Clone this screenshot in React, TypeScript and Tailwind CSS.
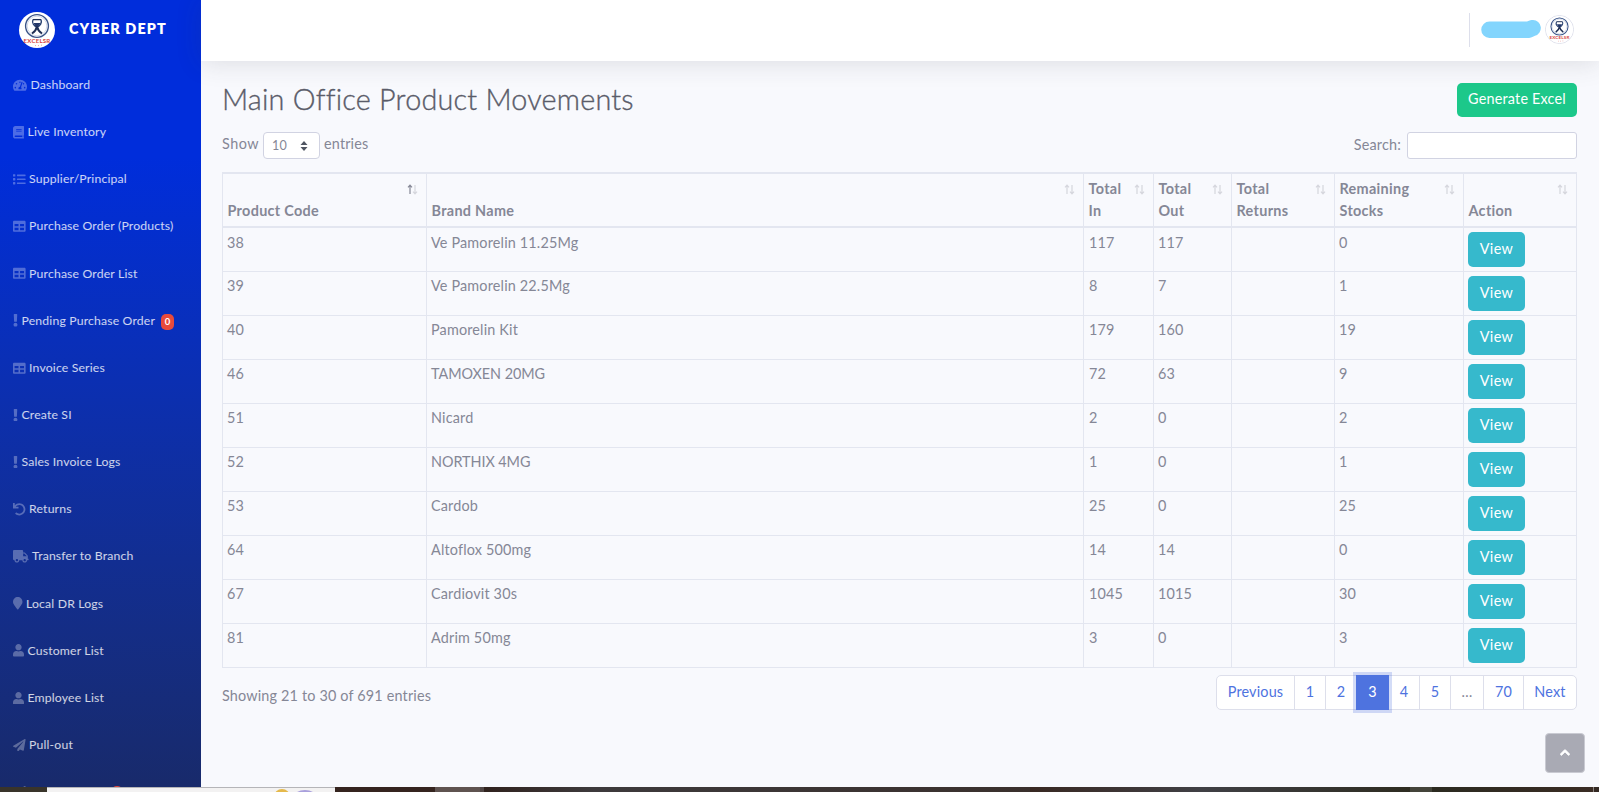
import type { ReactNode } from "react";
import type { IconType } from "react-icons";
import {
  FaBook,
  FaChevronUp,
  FaExclamation,
  FaList,
  FaMapMarker,
  FaPaperPlane,
  FaTable,
  FaTachometerAlt,
  FaTruck,
  FaUndo,
  FaUser,
} from "react-icons/fa";

type NavItem = { label: string; icon: IconType; width: string; badge?: string };

const navItems: NavItem[] = [
  { label: "Dashboard", icon: FaTachometerAlt, width: "w-[14px]" },
  { label: "Live Inventory", icon: FaBook, width: "w-[11px]" },
  { label: "Supplier/Principal", icon: FaList, width: "w-[12.6px]" },
  { label: "Purchase Order (Products)", icon: FaTable, width: "w-[12.6px]" },
  { label: "Purchase Order List", icon: FaTable, width: "w-[12.6px]" },
  { label: "Pending Purchase Order", icon: FaExclamation, width: "w-[5px]", badge: "0" },
  { label: "Invoice Series", icon: FaTable, width: "w-[12.6px]" },
  { label: "Create SI", icon: FaExclamation, width: "w-[5px]" },
  { label: "Sales Invoice Logs", icon: FaExclamation, width: "w-[5px]" },
  { label: "Returns", icon: FaUndo, width: "w-[12.6px]" },
  { label: "Transfer to Branch", icon: FaTruck, width: "w-[15.6px]" },
  { label: "Local DR Logs", icon: FaMapMarker, width: "w-[9.5px]" },
  { label: "Customer List", icon: FaUser, width: "w-[11px]" },
  { label: "Employee List", icon: FaUser, width: "w-[11px]" },
  { label: "Pull-out", icon: FaPaperPlane, width: "w-[12.6px]" },
];

const rows = [
  ["38", "Ve Pamorelin 11.25Mg", "117", "117", "", "0"],
  ["39", "Ve Pamorelin 22.5Mg", "8", "7", "", "1"],
  ["40", "Pamorelin Kit", "179", "160", "", "19"],
  ["46", "TAMOXEN 20MG", "72", "63", "", "9"],
  ["51", "Nicard", "2", "0", "", "2"],
  ["52", "NORTHIX 4MG", "1", "0", "", "1"],
  ["53", "Cardob", "25", "0", "", "25"],
  ["64", "Altoflox 500mg", "14", "14", "", "0"],
  ["67", "Cardiovit 30s", "1045", "1015", "", "30"],
  ["81", "Adrim 50mg", "3", "0", "", "3"],
];

const columns = ["Product Code", "Brand Name", "Total In", "Total Out", "Total Returns", "Remaining Stocks", "Action"];

const pages = ["Previous", "1", "2", "3", "4", "5", "…", "70", "Next"];
const pageWidths = ["w-[78px]", "w-[31px]", "w-[30px]", "w-[33px]", "w-[31px]", "w-[31px]", "w-[33px]", "w-[40px]", "w-[52px]"];

function Logo({ className }: { className: string }) {
  return (
    <svg viewBox="0 0 36 36" className={className}>
      <circle cx="18" cy="18" r="18" fill="#fff" />
      <circle cx="18" cy="14" r="11.4" fill="none" stroke="#3a5488" strokeWidth="1.4" />
      <circle cx="18" cy="14" r="9.8" fill="none" stroke="#b4c0d6" strokeWidth="0.6" />
      <path d="M14 7.600h8" stroke="#1f2f55" strokeWidth="1.3" />
      <path d="M14 7.600c-1.200 3.200.8 6.200 4 7.400 3.200-1.200 5.200-4.200 4-7.400" fill="none" stroke="#27406f" strokeWidth="1.4" />
      <path d="M14.600 11h6.800c-.7 2-1.900 3-3.400 4-1.500-1-2.700-2-3.400-4z" fill="#24386a" />
      <path d="M18 14.500c-.6 3-2 5-5 7M18 14.500c.6 3 2 5 5 7" fill="none" stroke="#1f2f55" strokeWidth="2" />
      <text x="18" y="31.300" textAnchor="middle" fontSize="4.800" fontWeight="700" fill="#d9463e" textLength="27" lengthAdjust="spacingAndGlyphs">
        EXCELSR
      </text>
      <path d="M16 33.600h1M19 33.600h1M22 33.200h1" stroke="#e58a84" strokeWidth="0.8" />
    </svg>
  );
}

function SortIcon({ active }: { active?: boolean }) {
  return (
    <svg viewBox="0 0 11 11" className="h-[11px] w-[11px] shrink-0" fill="none">
      <path d="M3 10V1.4M1 3.4L3 1.200l2 2.200" stroke={active ? "#858796" : "#d5d6dd"} strokeWidth="1.2" />
      <path d="M8 1v8.600M6 7.600L8 9.800l2-2.200" stroke="#d5d6dd" strokeWidth="1.2" />
    </svg>
  );
}

function Cell({ children, className }: { children: ReactNode; className: string }) {
  return <td className={`border border-[#e3e6f0] pb-0 pt-[3.5px] align-top ${className}`}>{children}</td>;
}

export default function App() {
  return (
    <div className="flex h-[792px] w-[1599px] flex-col overflow-hidden bg-[#f8f9fd] font-['Lato',sans-serif] text-[14.4px] leading-[21.6px] tracking-[0.17px] text-[#858796]">
      <div className="flex h-[787px] shrink-0 overflow-hidden">
        <aside className="flex w-[201px] shrink-0 flex-col overflow-hidden bg-linear-to-b from-[#002ddb] from-20% to-[#182a6b]">
          <div className="flex h-[61.5px] shrink-0 items-center pl-[19px]">
            <Logo className="mt-[-2px] h-9 w-9" />
            <span className="ml-[14px] mt-[-3px] text-[14.4px] font-extrabold tracking-[1.1px] text-white">CYBER DEPT</span>
          </div>
          <nav className="flex flex-col">
            {navItems.map(({ label, icon: Icon, width, badge }) => (
              <div key={label} className="flex h-[47.15px] shrink-0 items-center pl-[13px] text-[12.24px] leading-[18px] text-white/80">
                <Icon className={`h-[12.6px] shrink-0 text-white/30 ${width}`} />
                <span className="ml-[3.5px] whitespace-nowrap tracking-[0.16px]">{label}</span>
                {badge && (
                  <span className="ml-[6px] mt-[2px] flex h-4 w-[13px] items-center justify-center rounded-[5px] bg-[#e74a3b] text-[9.5px] font-bold tracking-normal text-white">
                    {badge}
                  </span>
                )}
              </div>
            ))}
            <div className="flex h-[47px] shrink-0 items-start pl-[13px] pt-[17px]">
              <FaPaperPlane className="h-[12.6px] w-[12.6px] text-white/30" />
              <span className="ml-[84px] h-4 w-[14px] rounded-full bg-[#e74a3b]" />
            </div>
          </nav>
        </aside>

        <div className="flex min-w-0 flex-1 flex-col">
          <header className="z-10 flex h-[61px] shrink-0 items-center justify-end bg-white pr-[25px] shadow-[0_2px_26px_0_rgba(58,59,69,0.15)]">
            <div className="mr-[11px] mt-[-2px] h-[34px] w-px bg-[#dddfeb]" />
            <svg viewBox="0 0 60 18" className="mr-[4px] mt-[-3px] h-[18px] w-[60px]">
              <path d="M8.500 1.500H46C49 .2 50 0 52 0a8 8 0 0 1 2 15.700C51 17.500 49 18 46 18H8.500a8.250 8.250 0 0 1 0-16.500z" fill="#83d5fd" />
            </svg>
            <div className="mt-[-2px] flex h-[29px] w-[29px] items-center justify-center rounded-full border border-[#dddfeb] bg-white">
              <Logo className="h-[27px] w-[27px]" />
            </div>
          </header>

          <main className="flex flex-1 flex-col pl-[21px] pr-[22px]">
            <div className="mt-[22px] flex h-[34px] items-center justify-between">
              <h1 className="mt-[-2px] text-[28.8px] font-light leading-[34px] tracking-[0.21px] text-[#5a5c69] [-webkit-text-stroke:0.35px_#5a5c69]">
                Main Office Product Movements
              </h1>
              <button className="h-[34px] w-[120px] rounded-[5px] bg-[#1cc88a] pb-[2px] tracking-[0.2px] text-white">Generate Excel</button>
            </div>

            <div className="mt-[15px] flex h-[27px] items-center justify-between">
              <div className="flex items-center">
                <span className="mt-[-3px] tracking-[0.5px]">Show</span>
                <div className="ml-[4px] flex h-[27px] w-[57px] items-center justify-between rounded-[4px] border border-[#d1d3e2] bg-white pl-[8px] pr-[11px] text-[12.6px]">
                  <span>10</span>
                  <svg viewBox="0 0 8 10" className="h-[10px] w-[8px]" fill="#4f5561">
                    <path d="M4 0l3.500 4h-7zM4 10L.5 6h7z" />
                  </svg>
                </div>
                <span className="ml-[4px] mt-[-3px] tracking-[0.15px]">entries</span>
              </div>
              <div className="flex items-center">
                <span className="mt-[-2px]">Search:</span>
                <div className="ml-[6px] h-[27px] w-[170px] rounded-[3px] border border-[#d1d3e2] bg-white" />
              </div>
            </div>

            <table className="mt-[13px] w-[1354px] max-w-[1354px] table-fixed border-collapse border border-[#e3e6f0]">
              <colgroup>
                <col className="w-[204px]" />
                <col className="w-[657px]" />
                <col className="w-[70px]" />
                <col className="w-[78px]" />
                <col className="w-[103px]" />
                <col className="w-[129px]" />
                <col className="w-[113px]" />
              </colgroup>
              <thead>
                <tr className="h-[54px]">
                  {columns.map((name, i) => (
                    <th key={name} className="border-x border-y-2 border-[#e3e6f0] p-0 align-bottom font-bold">
                      <div className={`flex h-[52px] justify-between pb-[4.500px] pl-[4.5px] text-left tracking-[0.32px] ${i < 2 ? "pr-[8px]" : "pr-[8px]"}`}>
                        <span className={i === 5 ? "w-[80px] self-end" : i > 1 && i < 5 ? "w-[40px] self-end" : "self-end"}>{name}</span>
                        <div className="pt-[10px]">
                          <SortIcon active={i === 0} />
                        </div>
                      </div>
                    </th>
                  ))}
                </tr>
              </thead>
              <tbody>
                {rows.map((row) => (
                  <tr key={row[0]} className="h-[44px]">
                    {row.map((value, i) => (
                      <Cell key={i} className={i === 1 && value === value.toUpperCase() ? "pl-[4px] tracking-[-0.05px]" : i === 2 ? "pl-[5px]" : "pl-[4px]"}>
                        {value}
                      </Cell>
                    ))}
                    <td className="border border-[#e3e6f0] py-0 pl-[4px] align-middle">
                      <button className="block h-[35px] w-[57px] rounded-[5px] bg-[#36b9cc] tracking-[0.35px] text-white">View</button>
                    </td>
                  </tr>
                ))}
              </tbody>
            </table>

            <div className="mt-[7px] flex h-[35px] items-center justify-between">
              <span className="mt-[8px]">Showing 21 to 30 of 691 entries</span>
              <div className="flex h-[35px] overflow-visible rounded-[5px] border border-[#dddfeb] bg-white text-[#4e73df]">
                {pages.map((page, i) => (
                  <div
                    key={page}
                    className={`flex items-center justify-center ${pageWidths[i]} ${
                      page === "3"
                        ? "z-10 -my-px bg-[#4e73df] text-white shadow-[0_0_0_3px_rgba(78,115,223,0.25)]"
                        : i < 8 && i !== 2
                          ? "border-r border-[#dddfeb]"
                          : ""
                    } ${page === "…" ? "text-[#858796]" : ""}`}
                  >
                    {page}
                  </div>
                ))}
              </div>
            </div>

            <div className="-mr-[8px] mt-[23px] flex h-[40px] w-[40px] items-center justify-center self-end rounded-[4px] border border-[#c9cad2] bg-[#a9aab4] text-white">
              <FaChevronUp className="h-[11px] w-[10px]" stroke="currentColor" strokeWidth="40" />
            </div>
          </main>
        </div>
      </div>

      <footer className="flex h-[5px] shrink-0 overflow-hidden">
        <div className="w-[47px] bg-[#39342a]" />
        <div className="flex w-[288px] items-start overflow-hidden border-t border-[#b5b5b8] bg-[#f3f2f2] pl-[227px]">
          <div className="mt-[1px] h-[16px] w-[16px] shrink-0 rounded-full bg-[#e5b94c]" />
          <div className="ml-[3px] mt-[2px] h-[16px] w-[24px] shrink-0 rounded-[50%] bg-[#a9a0dc]" />
        </div>
        <div className="w-[100px] bg-[#35241f]" />
        <div className="w-[45px] bg-[#5f5350]" />
        <div className="w-[4px] bg-[#514746]" />
        <div className="w-[546px] bg-linear-to-r from-[#30221e] via-[#3d3a3c] via-20% to-[#3a302d]" />
        <div className="w-[380px] bg-linear-to-r from-[#382822] via-[#404045] via-45% to-[#2e2c21]" />
        <div className="w-[22px] bg-[#44443a]" />
        <div className="w-[161px] bg-linear-to-r from-[#2b2a20] to-[#3a2c24]" />
        <div className="w-px bg-[#8a827d]" />
        <div className="flex-1 bg-[#332923]" />
      </footer>
    </div>
  );
}
